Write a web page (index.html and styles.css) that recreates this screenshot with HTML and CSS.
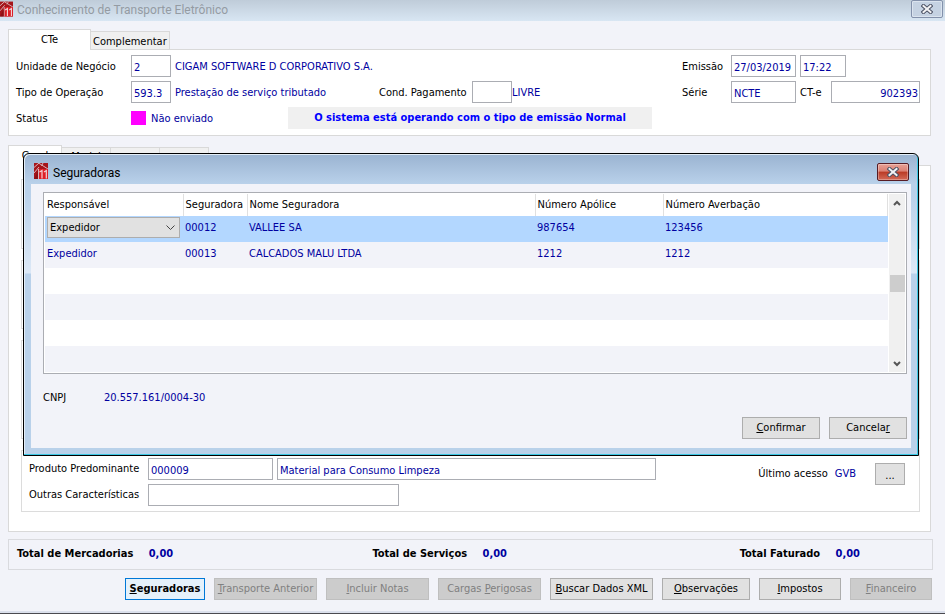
FILE: index.html
```
<!DOCTYPE html>
<html lang="pt-BR">
<head>
    <meta charset="UTF-8">
    <meta name="viewport" content="width=device-width, initial-scale=1.0">
    <title>Conhecimento de Transporte Eletrônico</title>
    <link rel="stylesheet" href="styles.css">
</head>
<body>
    <svg class="symbols" aria-hidden="true">
        <symbol id="logo" viewBox="0 0 14 16">
            <rect width="14" height="16" fill="#a5151b"/>
            <path d="M0 4.500L5 0M0 10L5 4M4.500 0L14 6M9 0L7.500 3" fill="none" stroke="#d9b4ba" stroke-width="1"/>
            <path d="M4.500 6h9.500v10h-9.500z" fill="#dd1f26"/>
            <path d="M5.500 9L8 7.500V15.500M10 9L12.300 7.500V15.500" fill="none" stroke="#f3d3d6" stroke-width="1.200"/>
            <path d="M4.500 16V6" stroke="#d9b4ba" stroke-width="1"/>
            <path d="M0 16L4 8V16z" fill="#8d1015"/>
        </symbol>
        <symbol id="close" viewBox="0 0 12 10">
            <path d="M2.500 2L9.500 8M9.500 2L2.500 8" fill="none" stroke="#4c5264" stroke-width="4" stroke-linecap="square"/>
            <path d="M2.500 2L9.500 8M9.500 2L2.500 8" fill="none" stroke="#f3f3f5" stroke-width="2" stroke-linecap="square"/>
        </symbol>
    </svg>

    <header class="titlebar">
        <svg class="logo"><use href="#logo"/></svg>
        <h1>Conhecimento de Transporte Eletrônico</h1>
        <button type="button" class="close-btn" aria-label="Fechar"><svg><use href="#close"/></svg></button>
    </header>

    <main class="content">
        <nav class="tabs">
            <button type="button" class="tab active tab-cte">CTe</button>
            <button type="button" class="tab tab-comp">Complementar</button>
        </nav>
        <section class="panel cte-panel">
            <div class="cte-left">
                <div class="row">
                    <label class="label" for="unidade">Unidade de Negócio</label>
                    <input class="field w-40" id="unidade" value="2">
                    <span class="value">CIGAM SOFTWARE D CORPORATIVO S.A.</span>
                </div>
                <div class="row">
                    <label class="label" for="operacao">Tipo de Operação</label>
                    <input class="field w-40" id="operacao" value="593.3">
                    <span class="value operacao-nome">Prestação de serviço tributado</span>
                    <label class="label-cond" for="pagamento">Cond. Pagamento</label>
                    <input class="field w-40" id="pagamento">
                    <span class="value livre">LIVRE</span>
                </div>
                <div class="row">
                    <span class="label">Status</span>
                    <span class="status-color"></span>
                    <span class="value status-text">Não enviado</span>
                    <strong class="notice">O sistema está operando com o tipo de emissão Normal</strong>
                </div>
            </div>
            <div class="cte-right">
                <div class="row">
                    <label class="label-right" for="emissao">Emissão</label>
                    <input class="field w-65" id="emissao" value="27/03/2019">
                    <input class="field w-46" aria-label="Hora" value="17:22">
                </div>
                <div class="row">
                    <label class="label-right" for="serie">Série</label>
                    <input class="field w-65" id="serie" value="NCTE">
                    <label class="label-cte" for="numero">CT-e</label>
                    <input class="field number" id="numero" value="902393">
                </div>
            </div>
        </section>

        <nav class="tabs tabs-detail">
            <button type="button" class="tab active tab-geral">Geral</button>
            <button type="button" class="tab">Modal</button>
            <button type="button" class="tab"></button>
            <button type="button" class="tab"></button>
        </nav>
        <section class="panel detail-panel">
            <div class="group"></div>
            <div class="group"></div>
            <div class="group group-tall"></div>
            <div class="group product">
                <div class="product-fields">
                    <div class="row">
                        <label class="label-product" for="produto">Produto Predominante</label>
                        <input class="field w-125" id="produto" value="000009">
                        <input class="field produto-nome" aria-label="Nome do produto" value="Material para Consumo Limpeza">
                    </div>
                    <div class="row">
                        <label class="label-product" for="outras">Outras Características</label>
                        <input class="field outras" id="outras">
                    </div>
                </div>
                <div class="access">
                    <span>Último acesso</span>
                    <span class="value">GVB</span>
                    <button type="button" class="btn btn-more">...</button>
                </div>
            </div>
        </section>

        <section class="totals">
            <div>Total de Mercadorias <span>0,00</span></div>
            <div>Total de Serviços <span>0,00</span></div>
            <div>Total Faturado <span>0,00</span></div>
        </section>

        <footer class="actions">
            <button type="button" class="btn w-80 default"><u>S</u>eguradoras</button>
            <button type="button" class="btn w-103" disabled><u>T</u>ransporte Anterior</button>
            <button type="button" class="btn w-103" disabled><u>I</u>ncluir Notas</button>
            <button type="button" class="btn w-103" disabled>Cargas <u>P</u>erigosas</button>
            <button type="button" class="btn w-103"><u>B</u>uscar Dados XML</button>
            <button type="button" class="btn w-88"><u>O</u>bservações</button>
            <button type="button" class="btn w-82"><u>I</u>mpostos</button>
            <button type="button" class="btn w-82" disabled><u>F</u>inanceiro</button>
        </footer>
    </main>

    <div class="dialog" role="dialog" aria-labelledby="dialog-title">
        <div class="dialog-title">
            <svg class="logo"><use href="#logo"/></svg>
            <h2 id="dialog-title">Seguradoras</h2>
            <button type="button" class="close-btn close-red" aria-label="Fechar"><svg><use href="#close"/></svg></button>
        </div>
        <div class="dialog-body">
            <div class="grid-box">
                <table>
                    <colgroup>
                        <col class="col-resp">
                        <col class="col-seg">
                        <col class="col-nome">
                        <col class="col-apolice">
                        <col class="col-averb">
                    </colgroup>
                    <thead>
                        <tr><th>Responsável</th><th>Seguradora</th><th>Nome Seguradora</th><th>Número Apólice</th><th>Número Averbação</th></tr>
                    </thead>
                    <tbody>
                        <tr class="selected">
                            <td>
                                <div class="select-wrap">
                                    <select aria-label="Responsável"><option>Expedidor</option></select>
                                    <svg viewBox="0 0 9 6"><path d="M.5 .5L4.500 4.500L8.500 .5" fill="none" stroke="#444"/></svg>
                                </div>
                            </td>
                            <td>00012</td><td>VALLEE SA</td><td>987654</td><td>123456</td>
                        </tr>
                        <tr><td>Expedidor</td><td>00013</td><td>CALCADOS MALU LTDA</td><td>1212</td><td>1212</td></tr>
                        <tr><td></td><td></td><td></td><td></td><td></td></tr>
                        <tr><td></td><td></td><td></td><td></td><td></td></tr>
                        <tr><td></td><td></td><td></td><td></td><td></td></tr>
                        <tr><td></td><td></td><td></td><td></td><td></td></tr>
                    </tbody>
                </table>
                <div class="scrollbar">
                    <svg viewBox="0 0 8 6"><path d="M1 5L4 2L7 5" fill="none" stroke="#555" stroke-width="2"/></svg>
                    <div class="thumb"></div>
                    <svg viewBox="0 0 8 6"><path d="M1 1L4 4L7 1" fill="none" stroke="#555" stroke-width="2"/></svg>
                </div>
            </div>
            <div class="cnpj"><span class="cnpj-label">CNPJ</span><span class="value">20.557.161/0004-30</span></div>
            <div class="dialog-actions">
                <button type="button" class="btn w-78"><u>C</u>onfirmar</button>
                <button type="button" class="btn w-78">Cancela<u>r</u></button>
            </div>
        </div>
    </div>
</body>
</html>
```
FILE: styles.css
```
* {
    margin: 0;
    padding: 0;
    box-sizing: border-box;
}
body {
    min-height: 100vh;
    display: flex;
    flex-direction: column;
    position: relative;
    font-family: "DejaVu Sans Condensed", "Noto Sans", sans-serif;
    font-size: 11px;
    line-height: 14px;
    color: #000;
    background-color: #f2f3f9;
    border-bottom: 1px solid #4a4a4f;
    white-space: nowrap;
}
button, input, select {
    font: inherit;
    color: inherit;
}
.symbols {
    position: absolute;
    width: 0;
    height: 0;
}

/* title bars */
.titlebar {
    display: flex;
    align-items: flex-start;
    height: 21px;
    background: linear-gradient(#bfccd9, #d8e6f3);
}
.titlebar h1, .dialog-title h2 {
    flex: 1;
    font-family: Roboto, sans-serif;
    font-size: 12px;
    font-weight: normal;
    line-height: 20px;
}
.titlebar h1 {
    color: #949ba3;
    padding-left: 4px;
}
.logo {
    width: 14px;
    height: 16px;
    margin-top: 1px;
}
.titlebar .logo {
    width: 13px;
}
.close-btn {
    display: flex;
    align-items: center;
    justify-content: center;
    width: 32px;
    height: 18px;
    margin-right: 2px;
    border: 1px solid #8391ab;
    border-radius: 2px;
    background-color: #c5d2e2;
    box-shadow: inset 0 0 0 1px #dbe4ef;
}
.close-btn svg {
    width: 12px;
    height: 10px;
}

/* main form */
.content {
    flex: 1;
    display: flex;
    flex-direction: column;
    padding: 8px 12px 11px 8px;
    border-bottom: 2px solid #dbe0ec;
}
.tabs {
    display: flex;
    align-items: flex-end;
    height: 20px;
}
.tab {
    height: 18px;
    padding: 0 2px;
    border: 1px solid #d9d9d9;
    border-left: none;
    border-bottom: none;
    background-color: #f0f0f0;
}
.tab.active {
    height: 21px;
    margin-bottom: -1px;
    border-left: 1px solid #d9d9d9;
    background-color: #fff;
    z-index: 1;
}
.tab-cte {
    width: 83px;
}
.tab-comp {
    padding-top: 2px;
}
.tabs-detail {
    margin-top: 9px;
}
.tabs-detail .tab {
    width: 49px;
    line-height: 16px;
}
.tabs-detail .tab-geral {
    width: 54px;
    line-height: 18px;
}
.panel {
    margin-right: 2px;
    border: 1px solid #d9d9d9;
    background-color: #fff;
}
.cte-panel {
    display: flex;
    justify-content: space-between;
    padding: 3px 10px 4px 7px;
}
.row {
    display: flex;
    align-items: center;
    height: 26px;
}
.cte-panel label, .cte-panel .label, .cte-panel .value {
    padding-top: 2px;
}
.field {
    height: 22px;
    padding: 2px 2px 0;
    border: 1px solid #abadb3;
    background-color: #fff;
    color: #0000a0;
}
.value {
    color: #0000a0;
}
.label {
    width: 115px;
}
.cte-left .value {
    margin-left: 4px;
}
.operacao-nome {
    width: 204px;
}
.label-cond {
    width: 93px;
}
.cte-left .livre {
    margin-left: 0;
}
.status-color {
    width: 15px;
    height: 14px;
    background-color: #f0f;
}
.cte-left .status-text {
    width: 137px;
    margin-left: 5px;
}
.notice {
    width: 364px;
    line-height: 22px;
    text-align: center;
    color: #00f;
    background-color: #f0f0f0;
}
.label-right {
    width: 49px;
}
.w-40 { width: 40px; }
.w-46 { width: 46px; }
.w-65 { width: 65px; margin-right: 4px; }
.w-78 { width: 78px; }
.w-80 { width: 80px; }
.w-82 { width: 82px; }
.w-88 { width: 88px; }
.w-103 { width: 103px; }
.w-125 { width: 125px; margin-right: 4px; }
.label-cte {
    width: 31px;
}
.number {
    width: 89px;
    text-align: right;
    padding-right: 1px;
}

.detail-panel {
    flex: 1;
    display: flex;
    flex-direction: column;
    gap: 11px;
    padding: 13px 10px 19px 12px;
}
.group {
    flex: 7;
    border: 1px solid #dcdcdc;
}
.group-tall {
    flex: 10;
}
.product {
    flex: none;
    display: flex;
    justify-content: space-between;
    padding: 5px 14px 3px 7px;
}
.label-product {
    width: 119px;
}
.produto-nome {
    width: 379px;
}
.outras {
    width: 251px;
}
.access {
    display: flex;
    align-items: center;
    gap: 7px;
    height: 36px;
}
.btn {
    height: 22px;
    border: 1px solid #adadad;
    background-color: #e1e1e1;
}
.btn:disabled {
    border-color: #bfbfbf;
    background-color: #ccc;
    color: #808080;
}
.btn-more {
    width: 30px;
    margin-left: 12px;
    padding-top: 4px;
}
.default {
    border-color: #0078d7;
    background-color: #e5f1fb;
    font-weight: bold;
}
.totals {
    display: grid;
    grid-template-columns: 355fr 367fr 192fr;
    margin-top: 7px;
    padding: 7px 0 8px 8px;
    border: 1px solid #d9dade;
    font-weight: bold;
}
.totals span {
    margin-left: 12px;
    color: #0000a0;
}
.actions {
    display: flex;
    justify-content: flex-end;
    gap: 9px;
    margin-top: 8px;
    padding-right: 1px;
}

/* Seguradoras dialog */
.dialog {
    position: absolute;
    top: 153px;
    left: 23px;
    right: 26px;
    z-index: 2;
    padding: 0 7px 7px;
    border: 1px solid #000;
    border-radius: 6px 6px 0 0;
    background: linear-gradient(#9ab3d1, #b9d1ea 30px, #b9d1ea 40px, #dce8f6 119px, #b9d1ea 120px);
    box-shadow: inset -1px -1px #3cc8e4, inset 1px 1px #e4eef8;
}
.dialog-title {
    display: flex;
    height: 30px;
    padding: 9px 0 0 3px;
}
.dialog-title h2 {
    padding-left: 5px;
}
.dialog-title .logo {
    margin-top: 0;
}
.close-red {
    border-color: #571c24;
    background: linear-gradient(#e8a196, #db8073 45%, #ba3a25 50%, #d36b58);
    box-shadow: inset 0 0 0 1px rgba(255, 255, 255, .3);
}
.dialog-body {
    padding: 8px 4px 9px 12px;
    background-color: #f2f3f9;
}
.grid-box {
    display: flex;
    padding: 1px;
    border: 1px solid #abadb3;
    background-color: #fff;
}
table {
    flex: 1;
    table-layout: fixed;
    border-collapse: collapse;
}
.col-resp { width: 138px; }
.col-seg { width: 64px; }
.col-nome { width: 288px; }
.col-apolice { width: 128px; }
th {
    height: 22px;
    padding-left: 2px;
    border-right: 1px solid #e0e0e0;
    font-weight: normal;
    text-align: left;
}
td {
    height: 26px;
    padding: 0 0 3px 2px;
    color: #0000a0;
}
td:nth-child(n + 3), th:nth-child(n + 3) {
    padding-left: 2px;
}
tbody tr:nth-child(even) {
    background-color: #f2f3f9;
}
tbody .selected {
    background-color: #b3d7ff;
}
.select-wrap {
    display: flex;
    align-items: center;
    position: relative;
    color: #000;
}
.select-wrap select {
    appearance: none;
    width: 133px;
    height: 21px;
    padding-left: 2px;
    border: 1px solid #adadad;
    background-color: #e1e1e1;
}
.select-wrap svg {
    position: absolute;
    right: 8px;
    width: 9px;
    height: 6px;
}
.scrollbar {
    display: flex;
    flex-direction: column;
    align-items: center;
    justify-content: space-between;
    width: 16px;
    margin-left: 1px;
    padding: 6px 0 5px;
    background-color: #f0f0f0;
}
.scrollbar svg {
    width: 8px;
    height: 6px;
}
.thumb {
    width: 15px;
    height: 17px;
    background-color: #cdcdcd;
}
.cnpj {
    display: flex;
    margin-top: 17px;
}
.cnpj-label {
    width: 61px;
}
.dialog-actions {
    display: flex;
    justify-content: flex-end;
    gap: 9px;
    margin-top: 12px;
}
```
